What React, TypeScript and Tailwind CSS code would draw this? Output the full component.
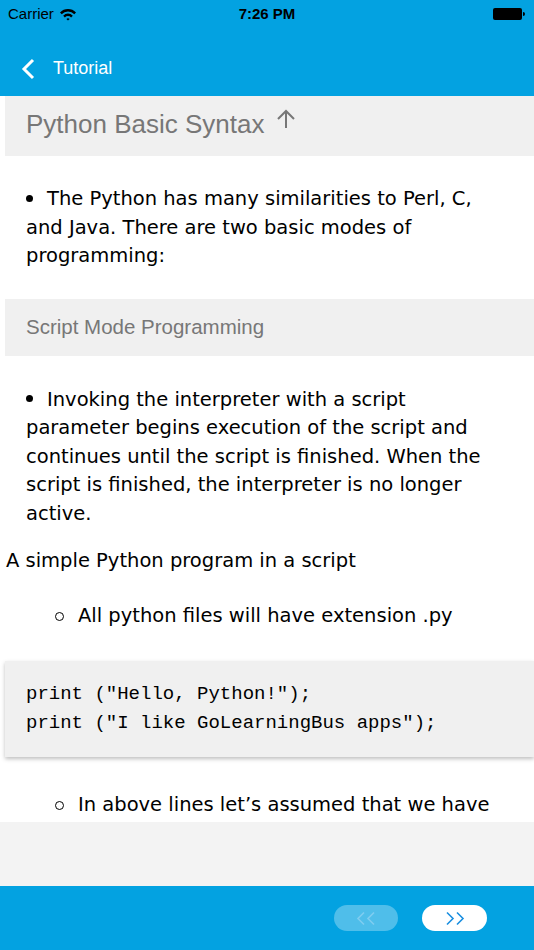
import React from "react";

function Wifi() {
  return (
    <svg width="18" height="13" viewBox="0 0 18 13" className="ml-[5px]">
      <path d="M1 4.5 A11 11 0 0 1 17 4.5 L15.3 6.2 A8.6 8.6 0 0 0 2.7 6.2 Z" fill="#000" />
      <path d="M4.2 7.7 A6.4 6.4 0 0 1 13.8 7.7 L12.1 9.4 A4 4 0 0 0 5.9 9.4 Z" fill="#000" />
      <path d="M7.4 10.9 A2.3 2.3 0 0 1 10.6 10.9 L9 12.6 Z" fill="#000" />
    </svg>
  );
}

function Chevrons({ dir, color }: { dir: "left" | "right"; color: string }) {
  const d =
    dir === "left"
      ? "M8 1.5 L2 7.5 L8 13.5 M18 1.5 L12 7.5 L18 13.5"
      : "M2 1.5 L8 7.5 L2 13.5 M12 1.5 L18 7.5 L12 13.5";
  return (
    <svg width="20" height="15" viewBox="0 0 20 15">
      <path d={d} stroke={color} strokeWidth="1.6" fill="none" />
    </svg>
  );
}

function Dot() {
  return <span className="inline-block w-[7px] h-[7px] rounded-full bg-black align-middle mr-[14px] -mt-[3px]" />;
}

function Ring() {
  return <span className="inline-block w-[9px] h-[9px] rounded-full border-[1.5px] border-black mr-[14px] shrink-0" />;
}

export default function App() {
  const body = { fontFamily: '"DejaVu Sans", Verdana, sans-serif' };
  const sans = { fontFamily: '"Liberation Sans", Arial, sans-serif' };
  return (
    <div className="w-[534px] h-[950px] flex flex-col bg-white overflow-hidden">
      {/* top bar */}
      <header className="bg-[#03a2e1] h-[96px] flex flex-col" style={sans}>
        <div className="h-[28px] flex items-center justify-between px-[8px] relative text-[15px] text-black">
          <div className="flex items-center">
            <span>Carrier</span>
            <Wifi />
          </div>
          <span className="absolute left-1/2 -translate-x-1/2 font-semibold">7:26 PM</span>
          <div className="flex items-center mr-[1px]">
            <div className="w-[29px] h-[12px] bg-black rounded-[2px]" />
            <div className="w-[2px] h-[4px] bg-black ml-[1px] rounded-r" />
          </div>
        </div>
        <div className="flex-1 flex items-center pl-[20px] pt-[13px] text-white text-[18px]">
          <svg width="16" height="22" viewBox="0 0 16 22">
            <path d="M13 2 L4 11 L13 20" stroke="#fff" strokeWidth="3" fill="none" />
          </svg>
          <span className="ml-[17px]">Tutorial</span>
        </div>
      </header>

      {/* content */}
      <main className="h-[726px] overflow-hidden">
        <div className="ml-[5px] h-[60px] bg-[#f0f0f0] flex items-center pl-[21px] pb-[3px] text-[#777] text-[26px]" style={sans}>
          <span>Python Basic Syntax</span>
          <svg width="22" height="22" viewBox="0 0 22 22" className="ml-[11px] -mt-[12px]">
            <path d="M11 20 V3 M3 11 L11 3 L19 11" stroke="#777" strokeWidth="2" fill="none" />
          </svg>
        </div>

        <p className="mt-[29px] pl-[26px] pr-[20px] text-[19.5px] leading-[28.5px] text-black" style={body}>
          <Dot />The Python has many similarities to Perl, C, and Java. There are two basic modes of programming:
        </p>

        <div className="mt-[28px] ml-[5px] h-[57px] bg-[#f0f0f0] flex items-center pl-[21px] text-[#777] text-[20.5px]" style={sans}>
          Script Mode Programming
        </div>

        <p className="mt-[30px] pl-[26px] pr-[20px] text-[19.5px] leading-[28.5px] text-black" style={body}>
          <Dot />Invoking the interpreter with a script parameter begins execution of the script and continues until the script is finished. When the script is finished, the interpreter is no longer active.
        </p>

        <p className="mt-[19px] pl-[6px] text-[19.5px] leading-[28px] text-black" style={body}>
          A simple Python program in a script
        </p>

        <p className="mt-[27px] pl-[55px] text-[19.5px] leading-[28px] text-black flex items-center" style={body}>
          <Ring />
          All python files will have extension .py
        </p>

        <div
          className="mt-[31px] ml-[5px] h-[96px] bg-[#f0f0f0] shadow-[0_2px_4px_rgba(0,0,0,0.25)] flex flex-col justify-center pl-[21px] text-[19px] leading-[29px] text-black"
          style={{ fontFamily: '"Liberation Mono", "Courier New", monospace' }}
        >
          <div>print ("Hello, Python!");</div>
          <div>print ("I like GoLearningBus apps");</div>
        </div>

        <p className="mt-[34px] pl-[55px] text-[19.5px] leading-[28px] text-black flex items-center" style={body}>
          <Ring />
          In above lines let’s assumed that we have
        </p>
      </main>

      <div className="h-[64px] bg-[#f3f3f3]" />

      {/* bottom bar */}
      <footer className="h-[64px] bg-[#03a2e1] flex items-center justify-end pr-[47px] gap-[24px]">
        <div className="w-[64px] h-[26px] rounded-full bg-white/30 flex items-center justify-center">
          <Chevrons dir="left" color="#7fcdf0" />
        </div>
        <div className="w-[65px] h-[26px] rounded-full bg-white flex items-center justify-center">
          <Chevrons dir="right" color="#1a8fe0" />
        </div>
      </footer>
    </div>
  );
}
